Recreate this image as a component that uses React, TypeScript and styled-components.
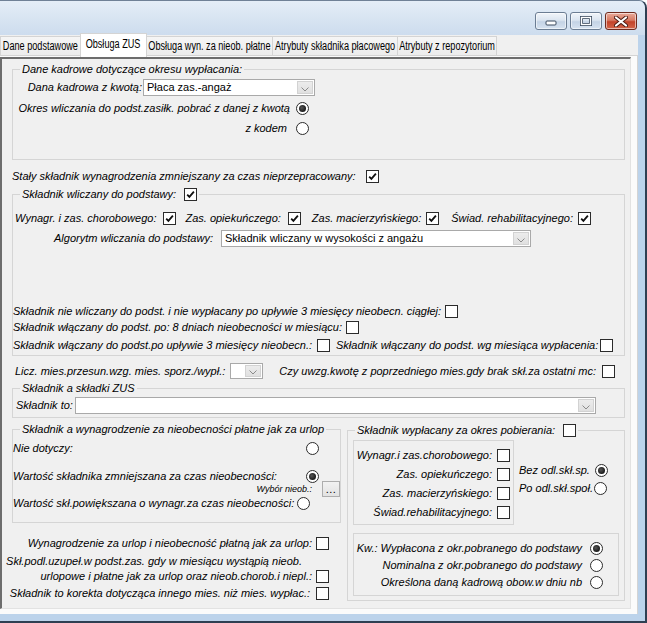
import React from 'react';
import styled, { createGlobalStyle } from 'styled-components';

const GlobalStyle = createGlobalStyle`
  html, body { margin: 0; padding: 0; background: #fff; }
  body { font-family: "Liberation Sans", Arial, sans-serif; font-size: 11px; color: #000; }
`;

const Window = styled.div`
  width: 647px;
  height: 623px;
  box-sizing: border-box;
  display: flex;
  flex-direction: column;
  background: #bcd3eb;
  border-top: 1px solid #6f8196;
  border-right: 2px solid #2f3f52;
  border-bottom: 2px solid #2f3f52;
  border-top-right-radius: 8px;
  overflow: hidden;
`;

const TitleBar = styled.div`
  height: 34px;
  flex: none;
  display: flex;
  justify-content: flex-end;
  align-items: flex-start;
  padding: 11px 8px 0 0;
  box-sizing: border-box;
  background: linear-gradient(180deg, #e4edf7 0%, #d6e3f1 60%, #cddcee 100%);
`;

const CaptionButton = styled.div<{ $close?: boolean }>`
  width: 32px;
  height: 18px;
  box-sizing: border-box;
  margin-left: 3px;
  border: 1px solid ${p => (p.$close ? '#6e2a1e' : '#6b7d93')};
  border-radius: 3px;
  display: flex;
  align-items: center;
  justify-content: center;
  background: ${p =>
    p.$close
      ? 'linear-gradient(180deg, #e9ab9b 0%, #d77a63 45%, #c2432a 55%, #d3654a 100%)'
      : 'linear-gradient(180deg, #f1f5fa 0%, #dbe5f0 45%, #c4d3e5 55%, #d7e3f0 100%)'};
  box-shadow: inset 0 0 0 1px rgba(255, 255, 255, 0.55);
`;

const Body = styled.div`
  flex: 1;
  display: flex;
  flex-direction: column;
  margin: 0 7px 7px 0;
  background: #f0f0f0;
  min-height: 0;
`;

const TabStrip = styled.div`
  height: 20px;
  flex: none;
  display: flex;
  align-items: flex-end;
  position: relative;
  z-index: 1;
`;

const Tab = styled.div<{ $w: number; $active?: boolean }>`
  width: ${p => p.$w}px;
  height: ${p => (p.$active ? 24 : 19)}px;
  margin-bottom: ${p => (p.$active ? -2 : 0)}px;
  box-sizing: border-box;
  flex: none;
  display: flex;
  align-items: center;
  justify-content: center;
  border: 1px solid #d4d4d4;
  border-bottom: none;
  margin-right: -1px;
  background: ${p => (p.$active ? '#fff' : 'linear-gradient(180deg, #f5f5f5, #ececec)')};
  padding-bottom: ${p => (p.$active ? 3 : 0)}px;
`;

const TabText = styled.span`
  display: inline-block;
  font-size: 12px;
  line-height: 14px;
  white-space: nowrap;
  transform: scaleX(0.76);
`;

const TabPage = styled.div`
  flex: 1;
  display: flex;
  border-top: 1px solid #d4d4d4;
  border-right: 1px solid #d4d4d4;
  background: #fbfbfb;
  padding: 1px 6px 5px 0;
  min-height: 0;
`;

const Panel = styled.div`
  flex: 1;
  display: flex;
  flex-direction: column;
  background: #f0f0f0;
  border-top: 2px solid #6d6d6d;
  border-left: 2px solid #6d6d6d;
  border-right: 1px solid #e2e2e2;
  border-bottom: 1px solid #e2e2e2;
  padding: 0 5px 0 10px;
`;

const Group = styled.fieldset<{ $mt?: number; $pb?: number; $grow?: boolean }>`
  margin: ${p => p.$mt ?? 0}px 0 0 0;
  padding: 0 0 ${p => p.$pb ?? 0}px 0;
  border: 1px solid #d5d5d5;
  min-width: 0;
  flex: ${p => (p.$grow ? '1 1 0' : 'none')};
  box-sizing: border-box;
`;

const Legend = styled.legend`
  margin-left: 7px;
  padding: 0 2px;
  display: flex;
  align-items: center;
  height: 13px;
`;

const Inset = styled.div<{ $w?: number; $pt?: number; $pb?: number; $pr?: number }>`
  ${p => (p.$w ? `width: ${p.$w}px;` : '')}
  flex: none;
  box-sizing: border-box;
  border: 1px solid #d5d5d5;
  padding: ${p => p.$pt ?? 0}px ${p => p.$pr ?? 0}px ${p => p.$pb ?? 0}px 0;
  display: flex;
  flex-direction: column;
`;

const Columns = styled.div<{ $mt?: number; $gap?: number }>`
  display: flex;
  align-items: flex-start;
  gap: ${p => p.$gap ?? 0}px;
  margin-top: ${p => p.$mt ?? 0}px;
  flex: none;
`;

const Stack = styled.div<{ $w?: number; $pt?: number; $pl?: number; $pr?: number }>`
  display: flex;
  flex-direction: column;
  ${p => (p.$w ? `width: ${p.$w}px; flex: none;` : 'flex: 1;')}
  padding: ${p => p.$pt ?? 0}px ${p => p.$pr ?? 0}px 0 ${p => p.$pl ?? 0}px;
  box-sizing: border-box;
`;

const Row = styled.div<{ $h?: number; $mt?: number; $pl?: number; $end?: boolean }>`
  display: flex;
  align-items: center;
  justify-content: ${p => (p.$end ? 'flex-end' : 'flex-start')};
  height: ${p => p.$h ?? 16}px;
  margin-top: ${p => p.$mt ?? 0}px;
  padding-left: ${p => p.$pl ?? 0}px;
  flex: none;
`;

const Cell = styled.div<{ $w: number; $pr?: number }>`
  width: ${p => p.$w}px;
  flex: none;
  display: flex;
  justify-content: flex-end;
  padding-right: ${p => p.$pr ?? 0}px;
  box-sizing: border-box;
`;

const Label = styled.span<{ $ml?: number; $grow?: boolean; $small?: boolean }>`
  font-style: italic;
  font-size: ${p => (p.$small ? 9 : 11)}px;
  line-height: 13px;
  white-space: nowrap;
  margin-left: ${p => p.$ml ?? 0}px;
  ${p => (p.$grow ? 'flex: 1;' : '')}
`;

const CheckBox = styled.span<{ $ml?: number }>`
  width: 13px;
  height: 13px;
  flex: none;
  box-sizing: border-box;
  border: 1px solid #2b2b2b;
  background: #fff;
  margin-left: ${p => p.$ml ?? 0}px;
  display: inline-flex;
  align-items: center;
  justify-content: center;
`;

const RadioRing = styled.span<{ $ml?: number; $mr?: number }>`
  width: 13px;
  height: 13px;
  flex: none;
  box-sizing: border-box;
  border-radius: 50%;
  border: 1px solid #2b2b2b;
  background: #fff;
  margin-left: ${p => p.$ml ?? 0}px;
  margin-right: ${p => p.$mr ?? 0}px;
  display: inline-flex;
  align-items: center;
  justify-content: center;
`;

const RadioDot = styled.span`
  width: 7px;
  height: 7px;
  border-radius: 50%;
  background: radial-gradient(circle at 40% 40%, #555 0%, #1a1a1a 70%);
`;

const ComboBox = styled.div<{ $w: number; $h?: number; $ml?: number }>`
  width: ${p => p.$w}px;
  height: ${p => p.$h ?? 17}px;
  margin-left: ${p => p.$ml ?? 0}px;
  flex: none;
  box-sizing: border-box;
  border: 1px solid #a9a9a9;
  background: #fff;
  display: flex;
  padding: 1px;
`;

const ComboText = styled.span`
  flex: 1;
  padding-left: 2px;
  font-size: 11px;
  line-height: 13px;
  white-space: nowrap;
  overflow: hidden;
`;

const ComboButton = styled.span`
  width: 16px;
  flex: none;
  box-sizing: border-box;
  border: 1px solid #d2d2d2;
  background: linear-gradient(180deg, #ececec, #e0e0e0);
  display: flex;
  align-items: center;
  justify-content: center;
  padding-top: 3px;
`;

const DotsButton = styled.span<{ $ml?: number }>`
  width: 18px;
  height: 16px;
  flex: none;
  box-sizing: border-box;
  border: 1px solid #adadad;
  background: linear-gradient(180deg, #f2f2f2, #e2e2e2);
  margin-left: ${p => p.$ml ?? 0}px;
  display: flex;
  align-items: center;
  justify-content: center;
  font-size: 11px;
  line-height: 8px;
  letter-spacing: 0.5px;
`;

const Check = ({ on, ml }: { on?: boolean; ml?: number }) => (
  <CheckBox $ml={ml}>
    {on && (
      <svg width="11" height="11" viewBox="0 0 11 11">
        <path d="M2.2 5.6 L4.4 7.9 L8.9 2.6" fill="none" stroke="#111" strokeWidth="1.8" />
      </svg>
    )}
  </CheckBox>
);

const Radio = ({ on, ml, mr }: { on?: boolean; ml?: number; mr?: number }) => (
  <RadioRing $ml={ml} $mr={mr}>{on && <RadioDot />}</RadioRing>
);

const Combo = ({ w, h, ml, text }: { w: number; h?: number; ml?: number; text?: string }) => (
  <ComboBox $w={w} $h={h} $ml={ml}>
    <ComboText>{text}</ComboText>
    <ComboButton>
      <svg width="8" height="5" viewBox="0 0 8 5">
        <polyline points="0.5,0.5 4,4 7.5,0.5" fill="none" stroke="#8a8a8a" strokeWidth="1" />
      </svg>
    </ComboButton>
  </ComboBox>
);

const CaptionIcon = ({ kind }: { kind: 'min' | 'max' | 'close' }) => {
  if (kind === 'min')
    return (
      <svg width="12" height="10" viewBox="0 0 12 10">
        <rect x="1" y="5" width="10" height="4" rx="1" fill="#fff" stroke="#3a4a5e" />
      </svg>
    );
  if (kind === 'max')
    return (
      <svg width="12" height="10" viewBox="0 0 12 10">
        <rect x="1.5" y="1.5" width="9" height="7" fill="none" stroke="#3a4a5e" strokeWidth="3" />
        <rect x="1.5" y="1.5" width="9" height="7" fill="none" stroke="#fff" strokeWidth="1.4" />
      </svg>
    );
  return (
    <svg width="14" height="11" viewBox="0 0 14 11">
      <path d="M2 1.5 L12 9.5 M12 1.5 L2 9.5" stroke="#4a1a12" strokeWidth="4" strokeLinecap="round" />
      <path d="M2 1.5 L12 9.5 M12 1.5 L2 9.5" stroke="#fff" strokeWidth="2.2" strokeLinecap="round" />
    </svg>
  );
};

const tabs = [
  { label: 'Dane podstawowe', w: 81 },
  { label: 'Obsługa ZUS', w: 67, active: true },
  { label: 'Obsługa wyn. za nieob. płatne', w: 127 },
  { label: 'Atrybuty składnika płacowego', w: 126 },
  { label: 'Atrybuty z repozytorium', w: 100 },
];

export default function App() {
  return (
    <>
      <GlobalStyle />
      <Window>
        <TitleBar>
          <CaptionButton><CaptionIcon kind="min" /></CaptionButton>
          <CaptionButton><CaptionIcon kind="max" /></CaptionButton>
          <CaptionButton $close><CaptionIcon kind="close" /></CaptionButton>
        </TitleBar>
        <Body>
          <TabStrip>
            {tabs.map(t => (
              <Tab key={t.label} $w={t.w} $active={t.active}>
                <TabText>{t.label}</TabText>
              </Tab>
            ))}
          </TabStrip>
          <TabPage>
            <Panel>
              <Group $mt={4} $pb={23}>
                <Legend><Label>Dane kadrowe dotyczące okresu wypłacania:</Label></Legend>
                <Row $h={17} $mt={3}>
                  <Cell $w={129}><Label>Dana kadrowa z kwotą:</Label></Cell>
                  <Combo w={172} ml={1} text="Płaca zas.-angaż" />
                </Row>
                <Row $mt={4}>
                  <Cell $w={283} $pr={6}><Label>Okres wliczania do podst.zasiłk. pobrać z danej z kwotą</Label></Cell>
                  <Radio on />
                </Row>
                <Row $mt={4}>
                  <Cell $w={283} $pr={9}><Label>z kodem</Label></Cell>
                  <Radio />
                </Row>
              </Group>

              <Row $mt={8}>
                <Label>Stały składnik wynagrodzenia zmniejszany za czas nieprzepracowany:</Label>
                <Check on ml={10} />
              </Row>

              <Group $mt={4} $pb={2}>
                <Legend><Label>Składnik wliczany do podstawy:</Label><Check on ml={8} /></Legend>
                <Row $mt={9} $pl={2}>
                  <Label>Wynagr. i zas. chorobowego:</Label><Check on ml={7} />
                  <Label $ml={9}>Zas. opiekuńczego:</Label><Check on ml={7} />
                  <Label $ml={11}>Zas. macierzyńskiego:</Label><Check on ml={5} />
                  <Label $ml={12}>Świad. rehabilitacyjnego:</Label><Check on ml={5} />
                </Row>
                <Row $h={17} $mt={4}>
                  <Cell $w={200}><Label>Algorytm wliczania do podstawy:</Label></Cell>
                  <Combo w={310} ml={8} text="Składnik wliczany w wysokości z angażu" />
                </Row>
                <Row $mt={56}>
                  <Label>Składnik nie wliczany do podst. i nie wypłacany po upływie 3 miesięcy nieobecn. ciągłej:</Label>
                  <Check ml={4} />
                </Row>
                <Row>
                  <Label>Składnik włączany do podst. po: 8 dniach nieobecności w miesiącu:</Label>
                  <Check ml={4} />
                </Row>
                <Row $mt={2}>
                  <Label>Składnik włączany do podst.po upływie 3 miesięcy nieobecn.:</Label>
                  <Check ml={5} />
                  <Label $ml={6}>Składnik włączany do podst. wg miesiąca wypłacenia:</Label>
                  <Check ml={2} />
                </Row>
              </Group>

              <Row $mt={7} $pl={3}>
                <Label>Licz. mies.przesun.wzg. mies. sporz./wypł.:</Label>
                <Combo w={33} h={16} ml={5} />
                <Label $ml={16}>Czy uwzg.kwotę z poprzedniego mies.gdy brak skł.za ostatni mc:</Label>
                <Check ml={6} />
              </Row>

              <Group $mt={3} $pb={3}>
                <Legend><Label>Składnik a składki ZUS</Label></Legend>
                <Row $h={17} $mt={2} $pl={3}>
                  <Label>Składnik to:</Label>
                  <Combo w={521} ml={2} />
                </Row>
              </Group>

              <Columns $gap={6}>
                <Stack $w={329}>
                  <Group $mt={5} $pb={11}>
                    <Legend><Label>Składnik a wynagrodzenie za nieobecności płatne jak za urlop</Label></Legend>
                    <Row $mt={4}>
                      <Label $grow>Nie dotyczy:</Label>
                      <Radio mr={21} />
                    </Row>
                    <Row $mt={12}>
                      <Label $grow>Wartość składnika zmniejszana za czas nieobecności:</Label>
                      <Radio on mr={21} />
                    </Row>
                    <Row $h={10} $end>
                      <Label $small>Wybór nieob.:</Label>
                      <DotsButton $ml={10}>...</DotsButton>
                    </Row>
                    <Row $mt={1}>
                      <Label>Wartość skł.powiększana o wynagr.za czas nieobecności:</Label>
                      <Radio ml={3} />
                    </Row>
                  </Group>
                  <Row $mt={12}>
                    <Cell $w={300}><Label>Wynagrodzenie za urlop i nieobecność płatną jak za urlop:</Label></Cell>
                    <Check ml={4} />
                  </Row>
                  <Row $h={14} $mt={3}>
                    <Cell $w={300} $pr={10}><Label>Skł.podl.uzupeł.w podst.zas. gdy w miesiącu wystąpią nieob.</Label></Cell>
                  </Row>
                  <Row $h={14} $mt={1}>
                    <Cell $w={300}><Label>urlopowe i płatne jak za urlop oraz nieob.chorob.i niepl.:</Label></Cell>
                    <Check ml={4} />
                  </Row>
                  <Row $mt={2}>
                    <Cell $w={298}><Label>Składnik to korekta dotycząca innego mies. niż mies. wypłac.:</Label></Cell>
                    <Check ml={6} />
                  </Row>
                </Stack>

                <Group $mt={6} $pb={4} $grow>
                  <Legend><Label>Składnik wypłacany za okres pobierania:</Label><Check ml={8} /></Legend>
                  <Columns $mt={3}>
                    <Stack $pl={5} $w={166}>
                      <Inset $w={161} $pt={6} $pb={4} $pr={3}>
                        <Row $end>
                          <Label>Wynagr.i zas.chorobowego:</Label><Check ml={5} />
                        </Row>
                        <Row $end $mt={3}>
                          <Label>Zas. opiekuńczego:</Label><Check ml={5} />
                        </Row>
                        <Row $end $mt={3}>
                          <Label>Zas. macierzyńskiego:</Label><Check ml={5} />
                        </Row>
                        <Row $end $mt={3}>
                          <Label>Świad.rehabilitacyjnego:</Label><Check ml={5} />
                        </Row>
                      </Inset>
                    </Stack>
                    <Stack $pt={22} $pl={5}>
                      <Row>
                        <Label>Bez odl.skł.sp.</Label><Radio on ml={5} />
                      </Row>
                      <Row $mt={2}>
                        <Label>Po odl.skł.społ.</Label><Radio ml={1} />
                      </Row>
                    </Stack>
                  </Columns>
                  <Columns $mt={8}>
                    <Stack $pl={5} $pr={5}>
                      <Inset $pt={6} $pb={5} $pr={15}>
                        <Row $end>
                          <Label>Kw.: Wypłacona z okr.pobranego do podstawy</Label><Radio on ml={8} />
                        </Row>
                        <Row $end $mt={1}>
                          <Label>Nominalna z okr.pobranego do podstawy</Label><Radio ml={8} />
                        </Row>
                        <Row $end $mt={1}>
                          <Label>Określona daną kadrową obow.w dniu nb</Label><Radio ml={8} />
                        </Row>
                      </Inset>
                    </Stack>
                  </Columns>
                </Group>
              </Columns>
            </Panel>
          </TabPage>
        </Body>
      </Window>
    </>
  );
}
